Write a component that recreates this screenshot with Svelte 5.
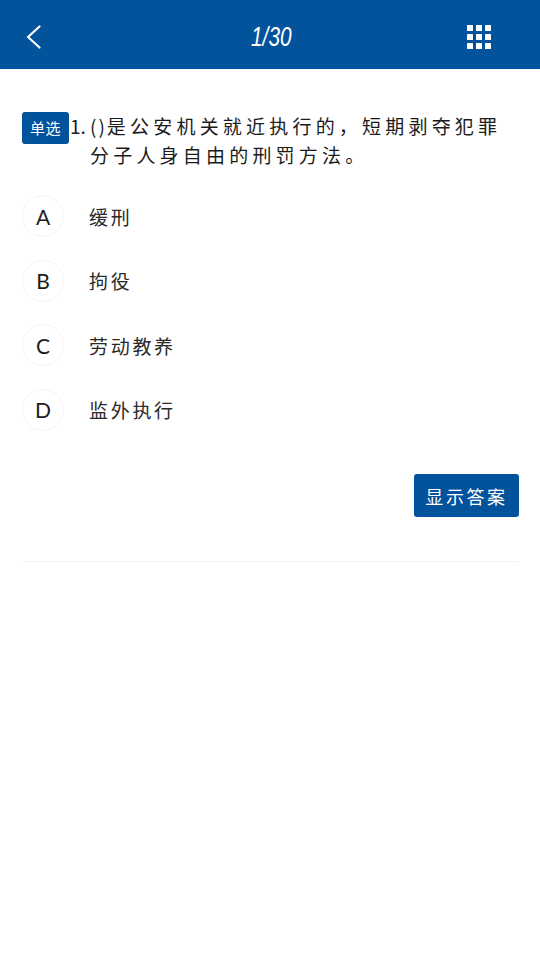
<script>
  const options = [
    { key: 'A', text: '缓刑' },
    { key: 'B', text: '拘役' },
    { key: 'C', text: '劳动教养' },
    { key: 'D', text: '监外执行' }
  ];
</script>

<div class="page">
  <header class="bar">
    <button class="icon-btn back" aria-label="返回">
      <svg width="15" height="24" viewBox="0 0 15 24"><path d="M13.5 1.5 L2 12 L13.5 22.5" fill="none" stroke="#fff" stroke-width="2.2" stroke-linecap="round" stroke-linejoin="round"/></svg>
    </button>
    <div class="title">1/30</div>
    <button class="icon-btn grid" aria-label="题目列表">
      <svg width="24" height="24" viewBox="0 0 24 24" fill="#fff">
        {#each [0, 9, 18] as y}
          {#each [0, 9, 18] as x}
            <rect x={x} y={y} width="6" height="6" rx="0.6" />
          {/each}
        {/each}
      </svg>
    </button>
  </header>

  <main class="content">
    <div class="question">
      <span class="badge">单选</span>
      <span class="num">1.</span>
      <p class="stem"><span class="paren">()</span>是公安机关就近执行的，短期剥夺犯罪分子人身自由的刑罚方法。</p>
    </div>

    <ul class="options">
      {#each options as o}
        <li class="option">
          <span class="circle">{o.key}</span>
          <span class="label">{o.text}</span>
        </li>
      {/each}
    </ul>

    <div class="actions">
      <button class="show">显示答案</button>
    </div>
    <div class="divider"></div>
  </main>
</div>

<style>
  :global(body) {
    margin: 0;
    background: #fff;
  }
  .page {
    width: 540px;
    min-height: 960px;
    background: #fff;
    color: #1c1c1c;
    font-family: "Noto Sans CJK SC", "Noto Sans", sans-serif;
    font-weight: 400;
  }
  .bar {
    height: 69px;
    background: #03529c;
    display: grid;
    grid-template-columns: 1fr auto 1fr;
    align-items: center;
    padding: 4px 49px 0 26px;
    box-sizing: border-box;
  }
  .icon-btn {
    background: none;
    border: 0;
    padding: 0;
    display: flex;
  }
  .grid {
    justify-self: end;
  }
  .back {
    justify-self: start;
  }
  .title {
    color: #fff;
    font-size: 27px;
    font-style: italic;
    font-family: "Liberation Sans", sans-serif;
    transform: scaleX(0.77);
    margin: 1px 0 0 26px;
  }
  .content {
    padding: 43px 21px 0 22px;
  }
  .question {
    display: flex;
    align-items: flex-start;
  }
  .badge {
    flex: none;
    width: 47px;
    height: 32px;
    background: #03529c;
    border-radius: 3px;
    color: #fff;
    font-size: 15px;
    line-height: 32px;
    text-align: center;
    letter-spacing: 0.5px;
  }
  .num {
    flex: none;
    width: 20px;
    margin-left: 1px;
    margin-top: -1px;
    font-size: 19px;
    line-height: 29px;
  }
  .stem {
    margin: -1px 0 0;
    font-size: 19px;
    line-height: 29px;
    letter-spacing: 4.2px;
    width: 412px;
  }
  .paren {
    letter-spacing: 2px;
  }
  .options {
    list-style: none;
    margin: 26px 0 0;
    padding: 0;
  }
  .option {
    display: flex;
    align-items: center;
    height: 42px;
    margin-bottom: 22.5px;
  }
  .circle {
    flex: none;
    box-sizing: border-box;
    width: 42px;
    height: 42px;
    border-radius: 50%;
    border: 1px solid #f4f4f4;
    display: flex;
    align-items: center;
    justify-content: center;
    font-size: 21px;
    font-family: "Lato", sans-serif;
  }
  .label {
    margin-left: 25px;
    font-size: 19px;
    letter-spacing: 2.7px;
    color: #2a2a2a;
  }
  .actions {
    display: flex;
    justify-content: flex-end;
    margin-top: 43.5px;
  }
  .show {
    width: 105px;
    height: 43px;
    background: #03529c;
    color: #fff;
    border: 0;
    border-radius: 3px;
    padding: 0;
    font-family: inherit;
    font-size: 18px;
    letter-spacing: 2.6px;
  }
  .divider {
    height: 1px;
    background: #f1f1f1;
    margin-top: 44px;
  }
</style>
